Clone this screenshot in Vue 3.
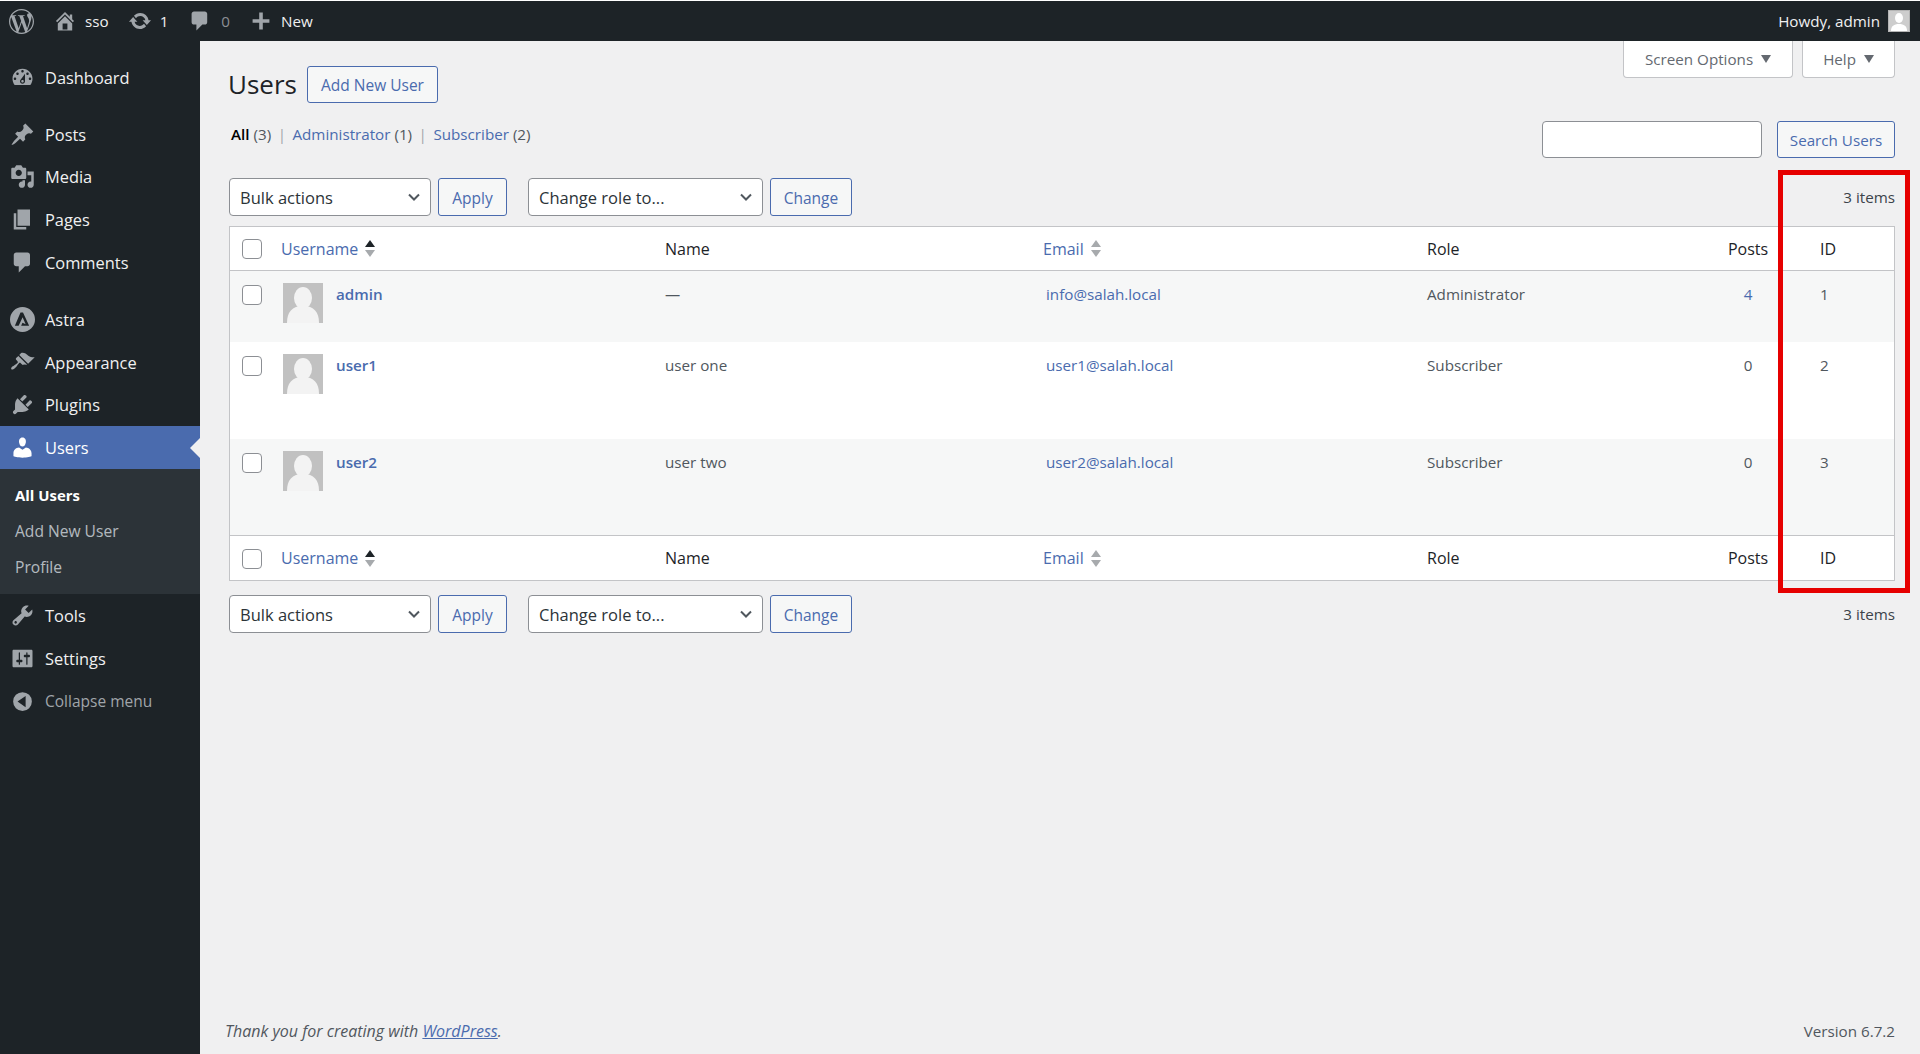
<script setup>
const icons = {
  dashboard: 'M3.76 16h12.48c1.1-1.37 1.76-3.11 1.76-5 0-4.42-3.58-8-8-8s-8 3.58-8 8c0 1.89.66 3.63 1.76 5zM10 4c.55 0 1 .45 1 1s-.45 1-1 1-1-.45-1-1 .45-1 1-1zM6 6c.55 0 1 .45 1 1s-.45 1-1 1-1-.45-1-1 .45-1 1-1zm8 0c.55 0 1 .45 1 1s-.45 1-1 1-1-.45-1-1 .45-1 1-1zm-5.37 5.55L12 7v6c0 1.1-.9 2-2 2s-2-.9-2-2c0-.57.24-1.08.63-1.45zM4 10c.55 0 1 .45 1 1s-.45 1-1 1-1-.45-1-1 .45-1 1-1zm12 0c.55 0 1 .45 1 1s-.45 1-1 1-1-.45-1-1 .45-1 1-1zm-5 3c0-.55-.45-1-1-1s-1 .45-1 1 .45 1 1 1 1-.45 1-1z',
  post: 'M10.44 3.02l1.82-1.82 6.36 6.35-1.83 1.82c-1.05-.68-2.48-.57-3.41.36l-.75.75c-.92.93-1.04 2.35-.35 3.41l-1.83 1.82-2.41-2.41-2.8 2.79c-.42.42-3.38 2.71-3.8 2.29s1.86-3.39 2.28-3.81l2.79-2.79L4.1 9.36l1.83-1.82c1.05.69 2.48.57 3.4-.36l.75-.75c.93-.92 1.05-2.35.36-3.41z',
  media: 'M13 11V4c0-.55-.45-1-1-1h-1.67L9 1H5L3.67 3H2c-.55 0-1 .45-1 1v7c0 .55.45 1 1 1h10c.55 0 1-.45 1-1zM7 4.5c1.38 0 2.5 1.12 2.5 2.5S8.38 9.5 7 9.5 4.5 8.38 4.5 7 5.62 4.5 7 4.5zM14 6h5v10.5c0 1.38-1.12 2.5-2.5 2.5S14 17.88 14 16.5s1.12-2.5 2.5-2.5c.17 0 .34.02.5.05V9h-3V6zm-4 8.05V13h2v3.5c0 1.38-1.12 2.5-2.5 2.5S7 17.88 7 16.5 8.12 14 9.5 14c.17 0 .34.02.5.05z',
  page: 'M6 15V2h10v13H6zm-1 1h8v2H3V5h2v11z',
  comment: 'M5 2h9c1.1 0 2 .9 2 2v7c0 1.1-.9 2-2 2h-2l-5 5v-5H5c-1.1 0-2-.9-2-2V4c0-1.1.9-2 2-2z',
  astra: 'M10 0a10 10 0 1 0 0 20 10 10 0 0 0 0-20zM10.4 4.4h-2L3.9 15h3l3.2-6.8 2.4 5.6-2.5-1.2-1.1 2.4h6.4z',
  appearance: 'M14.48 11.06L7.41 3.99l1.5-1.5c.5-.56 2.3-.47 3.51.32 1.21.8 1.43 1.28 2.91 2.1 1.18.64 2.45 1.26 4.45.85zm-.71.71L6.7 4.7 4.93 6.47c-.39.39-.39 1.02 0 1.41l1.06 1.06c.39.39.39 1.03 0 1.42-.6.6-1.43 1.11-2.21 1.69-.35.26-.7.53-1.01.84C1.43 13.23.4 14.75 1.1 15.45c.7.7 2.22-.33 3.56-1.67.31-.31.58-.66.84-1.01.58-.78 1.09-1.61 1.69-2.21.39-.39 1.02-.39 1.41 0l1.06 1.06c.39.39 1.02.39 1.41 0z',
  plugins: 'M13.11 4.36L9.87 7.6 8 5.73l3.24-3.24c.35-.34 1.05-.2 1.56.32.52.51.66 1.21.31 1.55zm-8 1.77l.91-1.12 9.01 9.01-1.19.84c-.71.71-2.63 1.16-3.82 1.16H6.14L4.9 17.26c-.59.59-1.54.59-2.12 0-.59-.58-.59-1.53 0-2.12l1.24-1.24v-3.88c0-1.13.4-3.19 1.09-3.89zm7.26 3.97l3.24-3.24c.34-.35 1.04-.21 1.55.31.52.51.66 1.21.31 1.55l-3.24 3.25z',
  users: 'M10 9.25c-2.27 0-2.73-3.44-2.73-3.44C7 4.02 7.82 2 9.97 2c2.16 0 2.98 2.02 2.71 3.81 0 0-.41 3.44-2.68 3.44zm0 2.57L12.72 10c2.39 0 4.52 2.33 4.52 4.53v2.49s-3.65 1.13-7.24 1.13c-3.65 0-7.24-1.13-7.24-1.13v-2.49c0-2.25 1.94-4.48 4.47-4.48z',
  tools: 'M16.68 9.77c-1.34 1.34-3.3 1.67-4.95.99l-5.41 6.52c-.99.99-2.59.99-3.58 0s-.99-2.59 0-3.57l6.52-5.42c-.68-1.65-.35-3.61.99-4.95 1.28-1.28 3.12-1.62 4.72-1.06l-2.89 2.89 2.82 2.82 2.86-2.87c.53 1.58.18 3.39-1.08 4.65zM3.81 16.21c.4.39 1.04.39 1.43 0 .4-.4.4-1.04 0-1.43-.39-.4-1.03-.4-1.43 0-.39.39-.39 1.03 0 1.43z',
  settings: 'M18 16V4c0-.55-.45-1-1-1H3c-.55 0-1 .45-1 1v12c0 .55.45 1 1 1h14c.55 0 1-.45 1-1zM8 11h1c.55 0 1 .45 1 1s-.45 1-1 1H8v1.5c0 .28-.22.5-.5.5s-.5-.22-.5-.5V13H6c-.55 0-1-.45-1-1s.45-1 1-1h1V5.5c0-.28.22-.5.5-.5s.5.22.5.5V11zm5-2h-1c-.55 0-1-.45-1-1s.45-1 1-1h1V5.5c0-.28.22-.5.5-.5s.5.22.5.5V7h1c.55 0 1 .45 1 1s-.45 1-1 1h-1v5.5c0 .28-.22.5-.5.5s-.5-.22-.5-.5V9z',
  collapse: 'M10 2.5a7.5 7.5 0 1 0 0 15 7.5 7.5 0 0 0 0-15zM12.5 14.5L6 10l6.5-4.5z',
  home: 'M16 8.5l1.53 1.53-1.06 1.06L10 4.62l-6.47 6.47-1.06-1.06L10 2.5l4 4v-2h2v4zm-6-2.46l6 5.99V18H4v-5.97zM12 17v-5H8v5h4z',
  update: 'M10.2 3.28c3.53 0 6.43 2.61 6.92 6h2.08l-3.5 4-3.5-4h2.32c-.45-1.97-2.21-3.45-4.32-3.45-1.45 0-2.73.71-3.54 1.78L4.95 5.66C6.23 4.2 8.11 3.28 10.2 3.28zm-.4 13.44c-3.52 0-6.43-2.61-6.92-6H.8l3.5-4c1.17 1.33 2.33 2.67 3.5 4H5.48c.45 1.97 2.21 3.45 4.32 3.45 1.45 0 2.73-.71 3.54-1.78l1.71 1.95c-1.28 1.46-3.15 2.38-5.25 2.38z',
  plus: 'M17 8.5v3h-5.5V17h-3v-5.5H3v-3h5.5V3h3v5.5z',
}

const wpLogo = 'M21.469 6.825c.84 1.537 1.318 3.3 1.318 5.175 0 3.979-2.156 7.456-5.363 9.325l3.295-9.527c.615-1.54.82-2.771.82-3.864 0-.405-.026-.78-.07-1.11m-7.981.105c.647-.03 1.232-.105 1.232-.105.582-.075.514-.93-.067-.899 0 0-1.755.135-2.88.135-1.064 0-2.85-.15-2.85-.15-.585-.03-.661.855-.075.885 0 0 .54.061 1.125.09l1.68 4.605-2.37 7.08L5.354 6.9c.649-.03 1.234-.1 1.234-.1.585-.075.516-.93-.065-.896 0 0-1.746.138-2.874.138-.2 0-.438-.008-.69-.015C4.911 3.15 8.235 1.215 12 1.215c2.809 0 5.365 1.072 7.286 2.833-.046-.003-.091-.009-.141-.009-1.06 0-1.812.923-1.812 1.914 0 .89.513 1.643 1.06 2.531.411.72.89 1.643.89 2.977 0 .915-.354 1.994-.821 3.479l-1.075 3.585-3.9-11.61.001.014zM12 22.784c-1.059 0-2.081-.153-3.048-.437l3.237-9.406 3.315 9.087c.024.053.05.101.078.149-1.12.393-2.325.609-3.582.609M1.211 12c0-1.564.336-3.05.935-4.39L7.29 21.709C3.694 19.96 1.212 16.271 1.211 12M12 0C5.385 0 0 5.385 0 12s5.385 12 12 12 12-5.385 12-12S18.615 0 12 0'

const menuGroups = [
  [{ label: 'Dashboard', icon: 'dashboard' }],
  [
    { label: 'Posts', icon: 'post' },
    { label: 'Media', icon: 'media' },
    { label: 'Pages', icon: 'page' },
    { label: 'Comments', icon: 'comment' },
  ],
  [
    { label: 'Astra', icon: 'astra' },
    { label: 'Appearance', icon: 'appearance' },
    { label: 'Plugins', icon: 'plugins' },
    { label: 'Users', icon: 'users', current: true },
    { label: 'Tools', icon: 'tools' },
    { label: 'Settings', icon: 'settings' },
  ],
]

const users = [
  { login: 'admin', name: '—', email: 'info@salah.local', role: 'Administrator', posts: '4', id: 1 },
  { login: 'user1', name: 'user one', email: 'user1@salah.local', role: 'Subscriber', posts: '0', id: 2 },
  { login: 'user2', name: 'user two', email: 'user2@salah.local', role: 'Subscriber', posts: '0', id: 3 },
]
</script>

<template>
  <div class="app">
    <header class="adminbar">
      <svg class="wp-logo" viewBox="0 0 24 24"><path :d="wpLogo" /></svg>
      <a class="bar-item home"><svg viewBox="0 0 20 20"><path :d="icons.home" /></svg><span>sso</span></a>
      <a class="bar-item updates"><svg viewBox="0 0 20 20"><path :d="icons.update" /></svg><span>1</span></a>
      <a class="bar-item comments"><svg viewBox="0 0 20 20"><path :d="icons.comment" /></svg><span class="muted">0</span></a>
      <a class="bar-item new"><svg viewBox="0 0 20 20"><path :d="icons.plus" /></svg><span>New</span></a>
      <div class="howdy">
        <span>Howdy, admin</span>
        <svg class="bar-avatar" viewBox="0 0 22 22">
          <rect width="22" height="22" fill="#b5b5b5" />
          <rect x="1" y="1" width="20" height="20" fill="#cdcdcd" />
          <ellipse cx="11" cy="8" rx="4" ry="5" fill="#fff" />
          <path d="M3 21c0-5 3-7 8-7s8 2 8 7z" fill="#fff" />
        </svg>
      </div>
    </header>

    <div class="body">
      <nav class="sidebar">
        <ul v-for="(group, gi) in menuGroups" :key="gi" class="menu-group">
          <template v-for="item in group" :key="item.label">
            <li class="menu-item" :class="{ current: item.current }">
              <svg viewBox="0 0 20 20"><path :d="icons[item.icon]" fill-rule="evenodd" /></svg>
              <span>{{ item.label }}</span>
            </li>
            <li v-if="item.current" class="submenu">
              <a class="strong">All Users</a>
              <a>Add New User</a>
              <a>Profile</a>
            </li>
          </template>
        </ul>
        <div class="menu-item collapse">
          <svg viewBox="0 0 20 20"><path :d="icons.collapse" fill-rule="evenodd" /></svg>
          <span>Collapse menu</span>
        </div>
      </nav>

      <main class="content">
        <div class="meta-tabs">
          <button class="tab">Screen Options <i class="caret"></i></button>
          <button class="tab">Help <i class="caret"></i></button>
        </div>

        <div class="page">
          <div class="title-row">
            <h1>Users</h1>
            <a class="btn add-new">Add New User</a>
          </div>

          <div class="filter-row">
            <div class="filters">
              <b>All</b> <span class="count">(3)</span>
              <span class="sep">|</span>
              <a>Administrator <span class="count">(1)</span></a>
              <span class="sep">|</span>
              <a>Subscriber <span class="count">(2)</span></a>
            </div>
            <div class="search">
              <input type="text" class="search-input" />
              <button class="btn search-btn">Search Users</button>
            </div>
          </div>

          <div class="tablenav top">
            <div class="select-wrap bulk">
              <select><option>Bulk actions</option></select>
              <svg viewBox="0 0 16 16"><path d="M3 5.5l5 5 5-5" /></svg>
            </div>
            <button class="btn apply">Apply</button>
            <div class="select-wrap role">
              <select><option>Change role to...</option></select>
              <svg viewBox="0 0 16 16"><path d="M3 5.5l5 5 5-5" /></svg>
            </div>
            <button class="btn change">Change</button>
            <span class="items">3 items</span>
          </div>

          <table class="users-table">
            <colgroup>
              <col style="width: 41px" />
              <col style="width: 384px" />
              <col style="width: 379px" />
              <col style="width: 383px" />
              <col style="width: 295px" />
              <col style="width: 72px" />
              <col />
            </colgroup>
            <thead>
              <tr>
                <th class="check"><input type="checkbox" class="cb" /></th>
                <th><a class="sort">Username <span class="arrows"><i class="up dark"></i><i class="down"></i></span></a></th>
                <th>Name</th>
                <th class="email-head"><a class="sort">Email <span class="arrows"><i class="up"></i><i class="down"></i></span></a></th>
                <th>Role</th>
                <th class="num">Posts</th>
                <th class="id">ID</th>
              </tr>
            </thead>
            <tbody>
              <tr v-for="u in users" :key="u.id" :class="'row-' + u.id">
                <td class="check"><input type="checkbox" class="cb" /></td>
                <td class="user-cell">
                  <svg class="avatar" viewBox="0 0 40 40">
                    <rect width="40" height="40" fill="#c1c1c1" />
                    <ellipse cx="20" cy="15" rx="9" ry="11" fill="#f3f3f3" />
                    <path d="M4 40c0-11 5-17 16-17s16 6 16 17z" fill="#f3f3f3" />
                  </svg>
                  <a class="login">{{ u.login }}</a>
                </td>
                <td>{{ u.name }}</td>
                <td class="email"><a>{{ u.email }}</a></td>
                <td>{{ u.role }}</td>
                <td class="num"><a v-if="u.posts !== '0'">{{ u.posts }}</a><template v-else>{{ u.posts }}</template></td>
                <td class="id">{{ u.id }}</td>
              </tr>
            </tbody>
            <tfoot>
              <tr>
                <th class="check"><input type="checkbox" class="cb" /></th>
                <th><a class="sort">Username <span class="arrows"><i class="up dark"></i><i class="down"></i></span></a></th>
                <th>Name</th>
                <th class="email-head"><a class="sort">Email <span class="arrows"><i class="up"></i><i class="down"></i></span></a></th>
                <th>Role</th>
                <th class="num">Posts</th>
                <th class="id">ID</th>
              </tr>
            </tfoot>
          </table>

          <div class="tablenav bottom">
            <div class="select-wrap bulk">
              <select><option>Bulk actions</option></select>
              <svg viewBox="0 0 16 16"><path d="M3 5.5l5 5 5-5" /></svg>
            </div>
            <button class="btn apply">Apply</button>
            <div class="select-wrap role">
              <select><option>Change role to...</option></select>
              <svg viewBox="0 0 16 16"><path d="M3 5.5l5 5 5-5" /></svg>
            </div>
            <button class="btn change">Change</button>
            <span class="items">3 items</span>
          </div>
        </div>

        <footer class="footer">
          <span class="thanks">Thank you for creating with <a>WordPress</a>.</span>
          <span>Version 6.7.2</span>
        </footer>
      </main>
    </div>

    <div class="highlight"></div>
  </div>
</template>

<style>
html, body { margin: 0; background: #fff; }
</style>

<style scoped>
.app {
  position: relative;
  height: 1054px;
  padding-top: 1px;
  box-sizing: border-box;
  display: flex;
  flex-direction: column;
  overflow: hidden;
  font-family: "Open Sans", "Noto Sans", sans-serif;
  font-size: 15.2px;
  color: #50575e;
}

/* top bar */
.adminbar {
  height: 40px;
  flex-shrink: 0;
  background: #1d2327;
  color: #f0f0f1;
  display: flex;
  align-items: center;
  font-size: 15.2px;
}
.adminbar svg { fill: #a0a5aa; }
.wp-logo { width: 25px; height: 25px; margin-left: 9px; }
.bar-item { display: flex; align-items: center; }
.bar-item svg { width: 24px; height: 24px; }
.home { margin-left: 19px; gap: 8px; }
.updates { margin-left: 19px; gap: 8px; }
.comments { margin-left: 20px; gap: 9px; }
.new { margin-left: 19px; gap: 8px; }
.muted { color: #8c8f94; }
.howdy { margin-left: auto; margin-right: 10px; display: flex; align-items: center; gap: 8px; }
.bar-avatar { width: 22px; height: 22px; }

.body { flex: 1; display: flex; min-height: 0; }

/* sidebar */
.sidebar {
  width: 200px;
  flex-shrink: 0;
  background: #1d2327;
  padding-top: 15px;
  box-sizing: border-box;
}
.menu-group { list-style: none; margin: 0 0 14px; padding: 0; }
.menu-group:last-of-type { margin-bottom: 0; }
.menu-item {
  height: 42.8px;
  display: flex;
  align-items: center;
  color: #f0f0f1;
  font-size: 16.4px;
  position: relative;
  box-sizing: border-box;
  padding-left: 10px;
}
.menu-item svg { width: 25px; height: 25px; fill: #a0a5aa; margin-right: 10px; }
.menu-item.current { background: #4a6bae; color: #fff; }
.menu-item.current svg { fill: #fff; }
.menu-item.current::after {
  content: '';
  position: absolute;
  right: 0;
  top: 50%;
  margin-top: -10px;
  border: 10px solid transparent;
  border-right-color: #f0f0f1;
  border-left-width: 0;
}
.submenu {
  background: #2c3338;
  height: 125px;
  padding: 8px 0 0 15px;
  box-sizing: border-box;
  display: flex;
  flex-direction: column;
}
.submenu a {
  height: 36px;
  display: flex;
  align-items: center;
  color: rgba(240, 246, 252, 0.7);
  font-size: 15.6px;
}
.submenu a.strong { color: #fff; font-weight: 700; font-size: 14.9px; }
.collapse { color: #a0a5aa; font-size: 15.5px; }

/* content */
.content {
  flex: 1;
  min-width: 0;
  background: #f0f0f1;
  display: flex;
  flex-direction: column;
  padding: 0 25px 0 29px;
}
.meta-tabs { display: flex; justify-content: flex-end; gap: 9px; height: 37px; }
.tab {
  font: inherit;
  color: #646970;
  background: #fff;
  border: 1px solid #c3c4c7;
  border-top: none;
  border-radius: 0 0 4px 4px;
  padding: 0 20px 0 20px;
  height: 37px;
  display: flex;
  align-items: center;
  gap: 8px;
}
.tab:first-child { padding-left: 21px; padding-right: 21px; }
.caret {
  width: 0;
  height: 0;
  border: 5.5px solid transparent;
  border-top: 8px solid #646970;
  border-bottom: none;
}

.page { flex: 1; }
.title-row { display: flex; align-items: center; gap: 10px; margin: -12px 0 0 -1px; height: 37px; }
h1 { margin: 0; font-size: 26px; font-weight: 400; color: #1d2327; line-height: 37px; }
.btn {
  font: inherit;
  font-size: 15.5px;
  height: 37px;
  box-sizing: border-box;
  color: #4a6bae;
  background: #f6f7f7;
  border: 1px solid #4a6bae;
  border-radius: 3px;
  padding: 0 12px;
  display: inline-flex;
  align-items: center;
  justify-content: center;
}
.add-new { width: 131px; padding: 0; }
.filter-row { display: flex; justify-content: space-between; margin-top: 18px; height: 37px; }
.filters { color: #646970; line-height: 26px; padding-left: 2px; white-space: pre-wrap; }
.filters b { color: #000; font-weight: 600; }
.filters a { color: #4a6bae; }
.filters .count { color: #50575e; }
.filters .sep { color: #a0a5aa; margin: 0 6.5px; }
.search { display: flex; gap: 15px; }
.search-input {
  width: 220px;
  height: 37px;
  box-sizing: border-box;
  background: #fff;
  border: 1px solid #8c8f94;
  border-radius: 4px;
}
.search-btn { width: 118px; padding: 0; font-size: 15.2px; }

.tablenav { display: flex; align-items: center; height: 38px; }
.tablenav.top { margin-top: 20px; margin-bottom: 10px; }
.tablenav.bottom { margin-top: 14px; }
.tablenav .btn { height: 38px; padding: 1px 0 0; }
.select-wrap { position: relative; height: 38px; }
.select-wrap select {
  appearance: none;
  font: inherit;
  font-size: 16.5px;
  color: #2c3338;
  width: 100%;
  height: 100%;
  background: #fff;
  border: 1px solid #8c8f94;
  border-radius: 4px;
  padding: 1px 24px 0 10px;
}
.select-wrap svg {
  position: absolute;
  right: 9px;
  top: 11px;
  width: 16px;
  height: 16px;
  fill: none;
  stroke: #50575e;
  stroke-width: 2;
  pointer-events: none;
}
.bulk { width: 202px; }
.apply { width: 69px; margin-left: 7px; }
.role { width: 235px; margin-left: 21px; }
.change { width: 82px; margin-left: 7px; }
.items { margin-left: auto; color: #3c434a; }

/* table */
.users-table {
  width: 100%;
  table-layout: fixed;
  border-collapse: separate;
  border-spacing: 0;
  background: #fff;
  border: 1px solid #c3c4c7;
  box-sizing: border-box;
}
.users-table th {
  height: 44px;
  box-sizing: border-box;
  padding: 0 0 0 10px;
  text-align: left;
  font-weight: 400;
  font-size: 16px;
  color: #1d2327;
}
.users-table thead th { border-bottom: 1px solid #c3c4c7; }
.users-table tfoot th { border-top: 1px solid #c3c4c7; height: 45px; }
.users-table td {
  padding: 11px 0 0 10px;
  vertical-align: top;
  height: 96px;
  box-sizing: border-box;
  line-height: 24px;
}
.users-table .row-1 td { height: 71px; }
.users-table .row-2 td { height: 97px; }
.users-table tbody tr:nth-child(odd) { background: #f6f7f7; }
.users-table th.check, .users-table td.check { padding-left: 12px; }
.users-table th.num, .users-table td.num { text-align: center; padding-left: 0; }
.users-table th.id, .users-table td.id { padding-left: 36px; }
.users-table th.email-head { padding-left: 9px; }
.users-table a { color: #4a6bae; }
.cb {
  appearance: none;
  display: block;
  margin: 0;
  width: 20px;
  height: 20px;
  background: #fff;
  border: 1px solid #8c8f94;
  border-radius: 4px;
  box-sizing: border-box;
}
.users-table th .cb { margin-top: 1px; }
.users-table td .cb { margin-top: 3px; }
.sort { display: inline-flex; align-items: center; gap: 7px; }
.arrows { display: flex; flex-direction: column; gap: 3px; }
.arrows i { display: block; width: 0; height: 0; border: 5px solid transparent; }
.arrows .up { border-bottom: 7px solid #a7aaad; border-top: none; }
.arrows .up.dark { border-bottom-color: #1d2327; }
.arrows .down { border-top: 7px solid #a7aaad; border-bottom: none; }
.user-cell { display: flex; gap: 13px; padding-left: 12px !important; }
.avatar { width: 40px; height: 40px; flex-shrink: 0; margin-top: 1px; }
.login { font-weight: 600; }
.users-table td.email { padding-left: 12px; }

/* footer */
.footer {
  height: 35px;
  display: flex;
  justify-content: space-between;
  align-items: flex-start;
  margin-left: -3px;
  color: #50575e;
  line-height: 24px;
}
.thanks { font-style: italic; font-size: 16px; margin-left: -1px; }
.thanks a { color: #4a6bae; text-decoration: underline; }

/* annotation drawn over the screenshot */
.highlight {
  position: absolute;
  left: 1778px;
  top: 170px;
  width: 132px;
  height: 423px;
  box-sizing: border-box;
  border: 5px solid #e60000;
  pointer-events: none;
}
</style>
